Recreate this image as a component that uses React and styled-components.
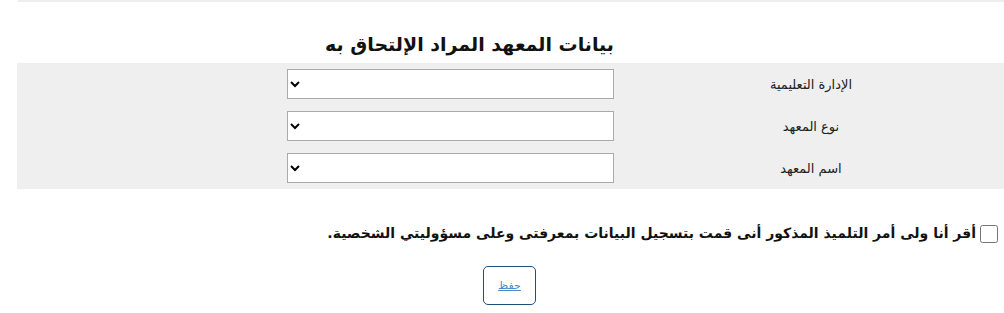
import React from 'react';
import styled, { createGlobalStyle } from 'styled-components';

const Global = createGlobalStyle`
  html, body {
    margin: 0;
    padding: 0;
    background: #fff;
  }
  body {
    direction: rtl;
    font-family: "DejaVu Sans", "Liberation Sans", sans-serif;
    color: #222;
  }
`;

const fields = ['الإدارة التعليمية', 'نوع المعهد', 'اسم المعهد'];

function App() {
  return (
    <P.Page>
      <Global />
      <P.Rule />
      <P.Title>بيانات المعهد المراد الإلتحاق به</P.Title>
      <P.Table>
        {fields.map((f) => (
          <P.Row key={f}>
            <P.Label>{f}</P.Label>
            <P.Cell>
              <P.Select>
                <option></option>
              </P.Select>
            </P.Cell>
          </P.Row>
        ))}
      </P.Table>
      <P.Agree>
        <P.Check type="checkbox" />
        <span>أقر أنا ولى أمر التلميذ المذكور أنى قمت بتسجيل البيانات بمعرفتى وعلى مسؤوليتي الشخصية.</span>
      </P.Agree>
      <P.Actions>
        <P.Save type="button">حفظ</P.Save>
      </P.Actions>
    </P.Page>
  );
}

export default App;

const P = {
  Page: styled.div`
    width: 1004px;
    min-height: 313px;
  `,
  Rule: styled.div`
    margin-left: 18px;
    border-top: 2px solid #eee;
  `,
  Title: styled.h3`
    margin: 31px 390px 0 0;
    height: 30px;
    font-size: 19px;
    font-weight: bold;
    text-align: right;
    color: #111;
  `,
  Table: styled.div`
    margin: 0 0 0 17px;
    background: #efefef;
    display: grid;
  `,
  Row: styled.div`
    display: grid;
    grid-template-columns: 390px 1fr;
    height: 42px;
    align-items: center;
  `,
  Label: styled.div`
    text-align: center;
    font-size: 13px;
    color: #222;
    padding-left: 4px;
  `,
  Cell: styled.div`
    display: flex;
    justify-content: flex-start;
  `,
  Select: styled.select`
    width: 327px;
    height: 30px;
    border: 1px solid #aaa;
    background: #fff;
    direction: rtl;
  `,
  Agree: styled.label`
    display: flex;
    align-items: flex-start;
    gap: 4px;
    margin: 36px 6px 0 0;
    font-size: 14px;
    font-weight: bold;
    color: #111;
  `,
  Check: styled.input`
    width: 18px;
    height: 18px;
    margin: 0;
    accent-color: #2a5a8a;
  `,
  Actions: styled.div`
    display: flex;
    justify-content: flex-end;
    padding-left: 483px;
    margin-top: 23px;
  `,
  Save: styled.button`
    width: 53px;
    height: 39px;
    background: #fff;
    border: 1px solid #1d4f7d;
    border-radius: 5px;
    color: #4a88c8;
    font-size: 11px;
    text-decoration: underline;
    font-family: "DejaVu Sans", sans-serif;
    cursor: pointer;
  `
};
